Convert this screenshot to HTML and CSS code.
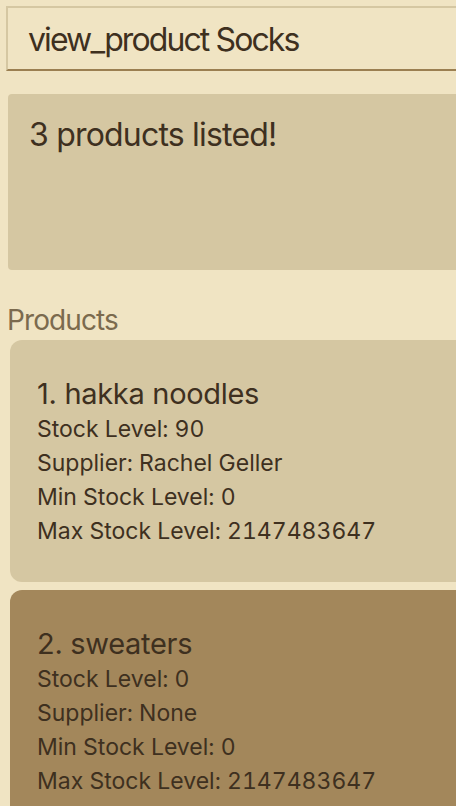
FILE: index.html
```html
<!DOCTYPE html>
<html lang="en">
<head>
<meta charset="utf-8">
<title>Inventory</title>
<link rel="stylesheet" href="styles.css">
</head>
<body>
<div class="app">
  <div class="command-box">view_product Socks</div>
  <div class="result-box">3 products listed!</div>
  <div class="list-label">Products</div>
  <div class="list">
    <div class="card">
      <div class="card-title">1. hakka noodles</div>
      <div class="card-line">Stock Level: 90</div>
      <div class="card-line">Supplier: Rachel Geller</div>
      <div class="card-line">Min Stock Level: 0</div>
      <div class="card-line">Max Stock Level: 2147483647</div>
    </div>
    <div class="card card-selected">
      <div class="card-title">2. sweaters</div>
      <div class="card-line">Stock Level: 0</div>
      <div class="card-line">Supplier: None</div>
      <div class="card-line">Min Stock Level: 0</div>
      <div class="card-line">Max Stock Level: 2147483647</div>
    </div>
  </div>
</div>
</body>
</html>
```
FILE: styles.css
```css
html, body {
  margin: 0;
  padding: 0;
  background: #f0e4c3;
  overflow: hidden;
  height: 100%;
}
body {
  font-family: Inter, "Noto Sans", sans-serif;
  color: #3e301f;
}
.app {
  width: 520px;
  display: flex;
  flex-direction: column;
}
.command-box {
  margin: 6px 0 0 6px;
  box-sizing: border-box;
  height: 65px;
  border-top: 2px solid #d5c7a2;
  border-left: 2px solid #d5c7a2;
  border-bottom: 2px solid #9b7f51;
  padding: 15px 0 0 20px;
  font-size: 32px;
  line-height: 34px;
  letter-spacing: -1.9px;
}
.result-box {
  margin: 23px 0 0 8px;
  height: 176px;
  box-sizing: border-box;
  background: #d5c7a2;
  border-radius: 4px;
  padding: 24px 0 0 21px;
  font-size: 32px;
  line-height: 34px;
  letter-spacing: -0.8px;
}
.list-label {
  margin: 34px 0 0 7px;
  font-size: 28px;
  line-height: 32px;
  letter-spacing: -0.9px;
  color: #7b6a4e;
}
.list {
  margin: 4px 0 0 10px;
  display: flex;
  flex-direction: column;
  gap: 8px;
}
.card {
  background: #d5c7a2;
  border-radius: 12px;
  padding: 36px 0 30px 27px;
  height: 242px;
  box-sizing: border-box;
}
.card-selected {
  background: #a3875b;
}
.card-title {
  font-size: 29px;
  line-height: 36px;
  letter-spacing: -0.3px;
}
.card-line {
  font-size: 23px;
  line-height: 34px;
  font-variant-numeric: tabular-nums;
}
```
